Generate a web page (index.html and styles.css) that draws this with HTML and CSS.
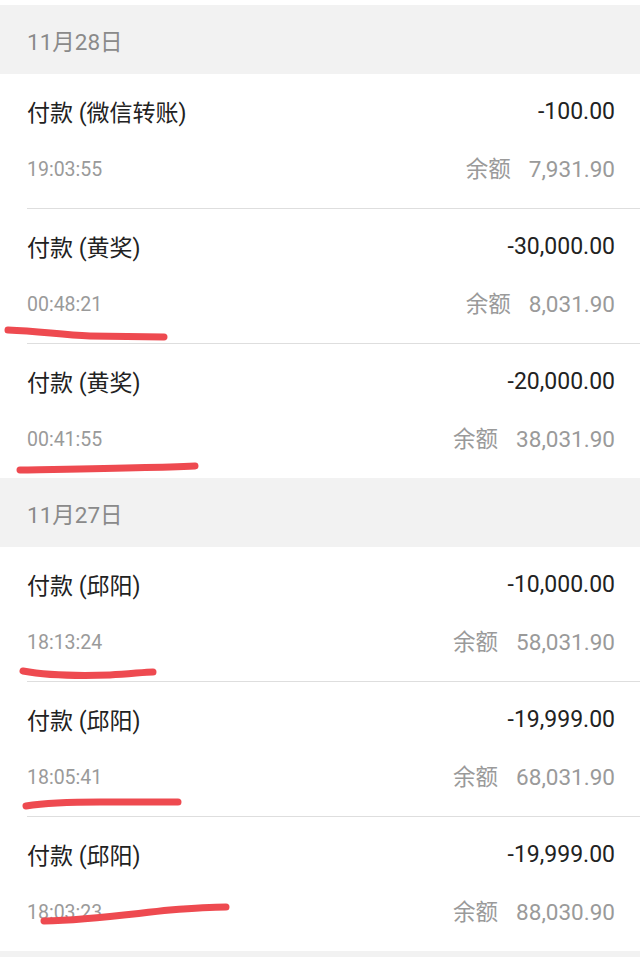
FILE: index.html
```html
<!DOCTYPE html>
<html lang="zh-CN">
<head>
<meta charset="utf-8">
<title>账单</title>
<link rel="stylesheet" href="styles.css">
</head>
<body>
<div class="page">
  <section class="day">
    <div class="day-header">11月28日</div>
    <div class="row">
      <div class="line"><span class="title">付款 (微信转账)</span><span class="amount">-100.00</span></div>
      <div class="line sub"><span class="time">19:03:55</span><span class="balance"><span class="label">余额</span>7,931.90</span></div>
    </div>
    <div class="row">
      <div class="line"><span class="title">付款 (黄奖)</span><span class="amount">-30,000.00</span></div>
      <div class="line sub"><span class="time">00:48:21</span><span class="balance"><span class="label">余额</span>8,031.90</span></div>
    </div>
    <div class="row">
      <div class="line"><span class="title">付款 (黄奖)</span><span class="amount">-20,000.00</span></div>
      <div class="line sub"><span class="time">00:41:55</span><span class="balance"><span class="label">余额</span>38,031.90</span></div>
    </div>
  </section>
  <section class="day">
    <div class="day-header">11月27日</div>
    <div class="row">
      <div class="line"><span class="title">付款 (邱阳)</span><span class="amount">-10,000.00</span></div>
      <div class="line sub"><span class="time">18:13:24</span><span class="balance"><span class="label">余额</span>58,031.90</span></div>
    </div>
    <div class="row">
      <div class="line"><span class="title">付款 (邱阳)</span><span class="amount">-19,999.00</span></div>
      <div class="line sub"><span class="time">18:05:41</span><span class="balance"><span class="label">余额</span>68,031.90</span></div>
    </div>
    <div class="row">
      <div class="line"><span class="title">付款 (邱阳)</span><span class="amount">-19,999.00</span></div>
      <div class="line sub"><span class="time">18:03:23</span><span class="balance"><span class="label">余额</span>88,030.90</span></div>
    </div>
  </section>
  <div class="footer-strip"></div>
  <svg class="marks" width="640" height="957" viewBox="0 0 640 957" aria-hidden="true">
    <g fill="none" stroke="#ee4a50" stroke-width="7" stroke-linecap="round" stroke-linejoin="round">
      <path d="M8 330 C 40 331, 60 335, 90 336 L 164 337"/>
      <path d="M20 470 C 80 469, 150 468, 195 466"/>
      <path d="M23 671 C 50 676, 80 676, 110 675 C 130 674, 145 672, 153 672"/>
      <path d="M26 806 C 45 803, 65 802, 100 802 L 178 802"/>
      <path d="M44 921 C 90 920, 130 914, 170 910 C 195 908, 215 907, 226 907"/>
    </g>
  </svg>
</div>
</body>
</html>
```

FILE: styles.css
```css
* {
  box-sizing: border-box;
}

html, body {
  margin: 0;
  padding: 0;
  background: #ffffff;
}

body {
  font-family: Roboto, "Noto Sans CJK SC", sans-serif;
  color: #222222;
}

.page {
  position: relative;
  width: 640px;
  height: 957px;
  overflow: hidden;
  padding-top: 5px;
}

.day-header {
  height: 69px;
  background: #f2f2f2;
  display: flex;
  align-items: center;
  padding-left: 27px;
  font-size: 22.5px;
  color: #8a8a8a;
}

.row {
  height: 135px;
  margin-left: 27px;
  padding-right: 25px;
  padding-top: 22px;
  border-bottom: 1px solid #dedede;
  display: flex;
  flex-direction: column;
  gap: 28px;
}

.row:last-child {
  height: 134px;
  border-bottom: none;
}

.line {
  height: 30px;
  display: flex;
  align-items: center;
  justify-content: space-between;
}

.title {
  font-size: 23px;
  color: #222222;
}

.amount {
  font-size: 23px;
  color: #222222;
}

.time {
  font-size: 19.5px;
  color: #9a9a9a;
}

.balance {
  font-size: 22.5px;
  line-height: 30px;
  color: #9a9a9a;
  display: flex;
  align-items: baseline;
}

.label {
  font-size: 22.5px;
  margin-right: 18px;
}

.footer-strip {
  height: 10px;
  background: #f2f2f2;
}

.marks {
  position: absolute;
  top: 0;
  left: 0;
  pointer-events: none;
}
```
